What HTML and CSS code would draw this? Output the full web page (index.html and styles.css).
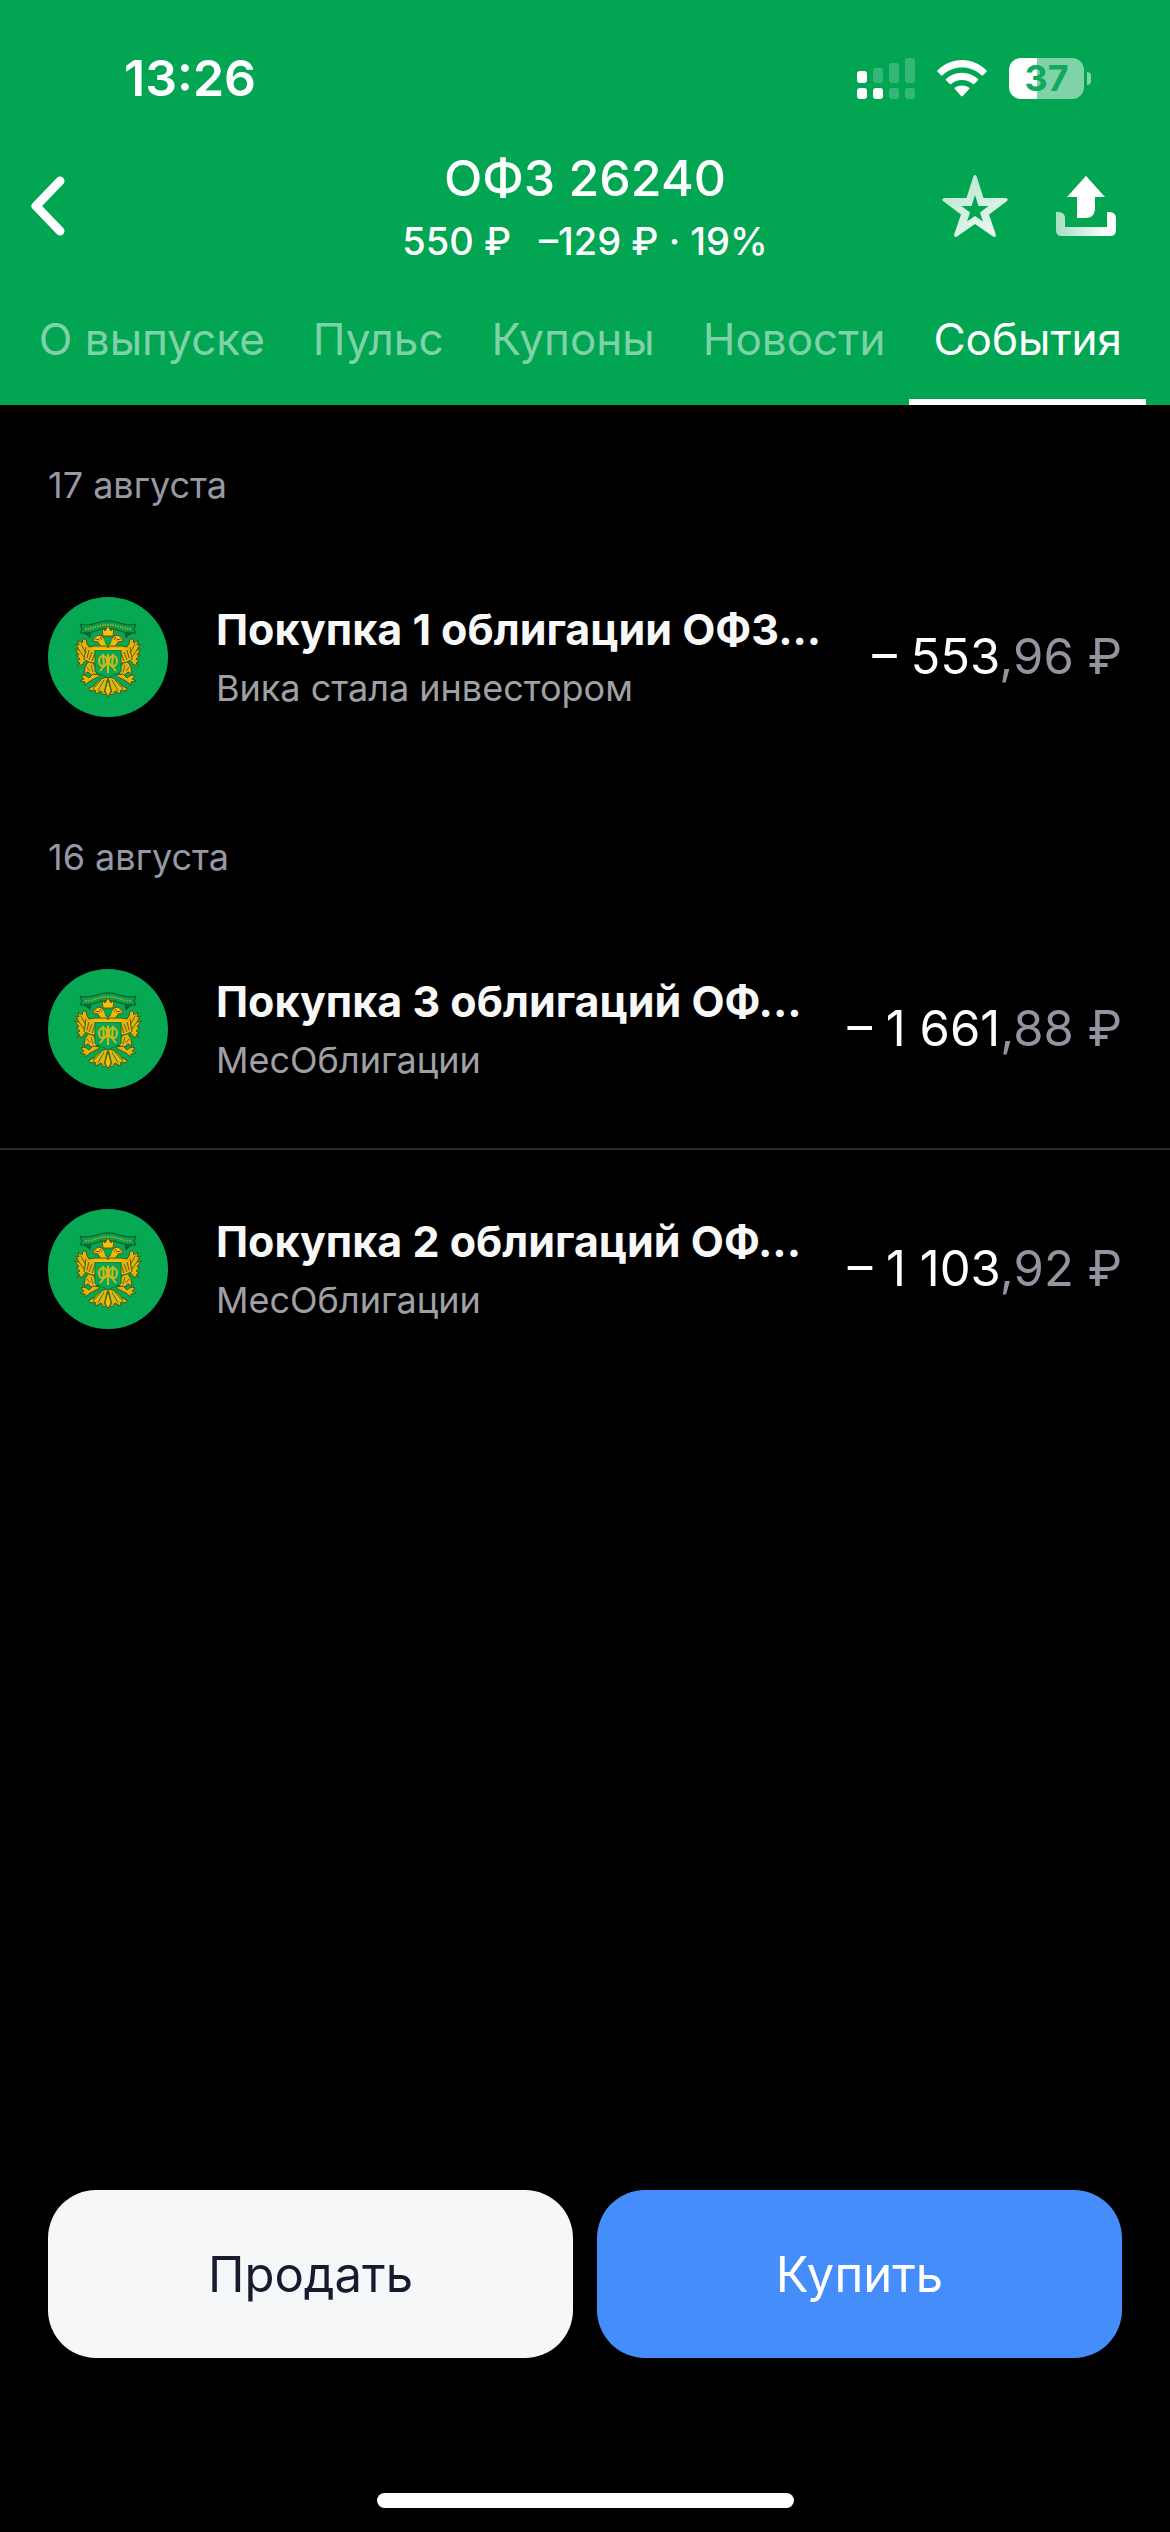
FILE: index.html
```html
<!DOCTYPE html>
<html lang="ru">
<head>
  <meta charset="UTF-8" />
  <meta name="viewport" content="width=device-width, initial-scale=1.0"/>
  <title>ОФЗ 26240</title>
  <link rel="stylesheet" href="styles.css">
</head>
<body>
  <!-- emblem shared by all the rows -->
  <svg class="sprite" aria-hidden="true">
    <defs>
      <g id="eagle-half">
        <path d="M60 24 C53 23 48 28 36 28 L32 27 L34 32 L32 36 L38 36 C46 36 52 31 60 32" fill="#079b4e" stroke="#06552c" stroke-width="1"/>
        <path d="M37 32 C46 32 52 27 60 28" fill="none" stroke="#8fae25" stroke-width="2" stroke-dasharray="1.5 1"/>
        <path d="M36 36 L43 37 L42 41 L39 38 Z" fill="#075f31" stroke="#075f31"/>
        <!-- head -->
        <path d="M60 50 L53 50 L50 45 L45 44 L46 41 L50 38 L54 39 L57 43 L58 47 L60 48 Z" fill="#edbc0b" stroke="#655715" stroke-width="1"/>
        <path d="M47 42 L52 43 M52 40 L54 43" stroke="#6b5510" stroke-width="1"/>
        <!-- wing -->
        <path d="M60 49 L46 49 L41 50 L39 47 L38 42 L35 42 L34 46 L30 43 L31 48 L28 47 L31 53 L27 52 L31 58 L28 58 L32 62 L29 64 L32 66 L29 68 L34 68 L38 63 L42 66 L48 66 L48 53 L60 53 Z" fill="#e5b40b" stroke="#4c5916" stroke-width="1"/>
        <path d="M33 47 L38 56 M31 53 L36 60 M38 50 L36 63 M41 53 L39 61 M44 55 L41 63 M47 56 L44 64" fill="none" stroke="#5f5a12" stroke-width="1"/>
        <!-- supporter -->
        <path d="M40 65 L37 70 L36 77 L40 75 L43 78 L49 77 L48 71 L45 66 Z" fill="#dfb211" stroke="#4c5916" stroke-width="1"/>
        <path d="M39 70 L42 74 M43 68 L45 75" stroke="#78610c"/>
        <path d="M45 77 L41 81 L37 78 L33 79 L36 82 L32 84 L37 85 L37 88 L42 84 L50 80 L52 78 Z" fill="#e5b40b" stroke="#4c5916" stroke-width="1"/>
        <!-- tail -->
        <path d="M60 80 C52 81 49 85 46 89 L41 91 L42 94 L47 93 L48 97 L53 94 L55 98 L60 96 Z" fill="#e5b40b" stroke="#4c5916" stroke-width="1"/>
        <path d="M59 83 L56 96 M56 83 L50 94 M53 83 L45 92" stroke="#2c8231" stroke-width="1"/>
      </g>
      <symbol id="emblem" viewBox="0 0 120 120">
        <circle cx="60" cy="60" r="60" fill="#06a853"/>
        <use href="#eagle-half"/>
        <use href="#eagle-half" transform="translate(120 0) scale(-1 1)"/>
        <path d="M55 39 L54 31 L57 34 L60 29 L63 34 L66 31 L65 39 Z" fill="#f5c20a" stroke="#655715" stroke-width="1"/>
        <path d="M56 42 H64 L63 46 L60 48 L57 46 Z" fill="#06a853"/>
        <path d="M47 53 H73 V74 C72 77 66 77 60 81 C54 77 48 77 47 74 Z" fill="#06a853" stroke="#07763d" stroke-width="1"/>
        <path d="M46 52 H74" stroke="#f5c20a" stroke-width="2"/>
        <g fill="none" stroke="#d7b716" stroke-width="2">
          <ellipse cx="55" cy="64" rx="4" ry="5"/>
          <ellipse cx="65" cy="64" rx="4" ry="5"/>
          <path d="M60 57 V76 M55 57 L56 69 L52 74 M65 57 L64 69 L68 74"/>
        </g>
        <path d="M60 82 L57 94 L60 100 L63 94 Z" fill="#f5c20a" stroke="#4c5916" stroke-width="1"/>
      </symbol>
    </defs>
  </svg>

  <div class="app">
    <header class="header">
      <div class="status">
        <span class="clock">13:26</span>
        <div class="status-icons">
          <svg class="signal" viewBox="0 0 58 41">
            <g fill="#fff">
              <rect x="0" y="13" width="10" height="12" rx="3"/>
              <rect x="0" y="30" width="10" height="11" rx="3"/>
              <rect x="16" y="30" width="10" height="11" rx="3"/>
            </g>
            <g fill="#fff" opacity=".2">
              <rect x="16" y="10" width="10" height="15" rx="3"/>
              <rect x="32" y="5" width="10" height="20" rx="3"/>
              <rect x="48" y="0" width="10" height="25" rx="3"/>
              <rect x="32" y="30" width="10" height="11" rx="3"/>
              <rect x="48" y="30" width="10" height="11" rx="3"/>
            </g>
          </svg>
          <svg class="wifi" viewBox="0 0 50 37">
            <g fill="#fff">
              <path d="M0.5 10.5 C14 -3.5 36 -3.5 49.5 10.5 Q50 11.2 49.5 11.8 L46 15.3 Q45.2 15.9 44.5 15.3 C33.5 5 16.5 5 5.5 15.3 Q4.8 15.9 4 15.3 L0.5 11.8 Q0 11.2 0.5 10.5 Z"/>
              <path d="M9 19 C18 10.5 32 10.5 41 19 Q41.6 19.7 41 20.3 L37.2 24 Q36.5 24.6 35.8 24 C30 18.5 20 18.5 14.2 24 Q13.5 24.6 12.8 24 L9 20.3 Q8.4 19.7 9 19 Z"/>
              <path d="M17.8 27.8 C22 24.6 28 24.6 32.2 27.8 Q32.8 28.4 32.2 29 L25.8 36 Q25 36.9 24.2 36 L17.8 29 Q17.2 28.4 17.8 27.8 Z"/>
            </g>
          </svg>
          <div class="battery"><span>37</span></div>
        </div>
      </div>

      <div class="top">
        <button class="back" aria-label="Назад">
          <svg width="36" height="60" viewBox="0 0 36 60"><path d="M30 5 L6 30 L30 55" fill="none" stroke="#fff" stroke-width="9" stroke-linecap="round" stroke-linejoin="round"/></svg>
        </button>
        <div class="heading">
          <h1>ОФЗ 26240</h1>
          <p><span>550 ₽</span><span>–129 ₽ · 19%</span></p>
        </div>
        <div class="actions">
          <button aria-label="В избранное">
            <svg width="66" height="62" viewBox="0 0 66 62">
              <defs>
                <linearGradient id="star-fill" x1="0" y1="0" x2=".5" y2="1">
                  <stop offset="0" stop-color="#fff" stop-opacity=".7"/>
                  <stop offset="1" stop-color="#fff" stop-opacity=".9"/>
                </linearGradient>
              </defs>
              <path fill="url(#star-fill)" fill-rule="evenodd" d="M31.5 1 Q33 -1 34.5 1 L41.5 23 H64 Q67 24 65 26 L47 39.5 L54 60 Q53.5 63 51 61.5 L33 49 L15 61.5 Q12.5 63 12 60 L19 39.5 L1 26 Q-1 24 2 23 H24.5 Z M33 20 L29.5 31 H19.500 L28 37.5 L25 46.5 L33 41 L41 46.5 L38 37.5 L46.5 31 H36.5 Z"/>
            </svg>
          </button>
          <button aria-label="Поделиться">
            <svg width="60" height="60" viewBox="0 0 60 60">
              <defs>
                <linearGradient id="tray-fill" x1="0" y1="0" x2="1" y2="0">
                  <stop offset="0" stop-color="#fff" stop-opacity=".65"/>
                  <stop offset=".9" stop-color="#fff"/>
                </linearGradient>
              </defs>
              <path fill="#fff" d="M29 1 Q30 -1 31 1 L49 21 H39 V32 C39 38 36 42 30 42 H21 V21 H11 Z"/>
              <path fill="url(#tray-fill)" d="M0 36 H3 Q9 37 9 42 V51 H51 V36 H54 Q60 37 60 42 V54 Q60 60 54 60 H6 Q0 60 0 54 Z"/>
            </svg>
          </button>
        </div>
      </div>

      <nav class="tabs">
        <a href="#">О выпуске</a>
        <a href="#">Пульс</a>
        <a href="#">Купоны</a>
        <a href="#">Новости</a>
        <a href="#" class="active">События</a>
      </nav>
    </header>

    <main class="events">
      <h2 class="date">17 августа</h2>
      <div class="event">
        <svg class="logo"><use href="#emblem"/></svg>
        <div class="info">
          <h3>Покупка 1 облигации ОФЗ...</h3>
          <p>Вика стала инвестором</p>
        </div>
        <div class="sum">– 553<span>,96 ₽</span></div>
      </div>

      <h2 class="date">16 августа</h2>
      <div class="event">
        <svg class="logo"><use href="#emblem"/></svg>
        <div class="info">
          <h3>Покупка 3 облигаций ОФ...</h3>
          <p>МесОблигации</p>
        </div>
        <div class="sum">– 1 661<span>,88 ₽</span></div>
      </div>
      <div class="event">
        <svg class="logo"><use href="#emblem"/></svg>
        <div class="info">
          <h3>Покупка 2 облигаций ОФ...</h3>
          <p>МесОблигации</p>
        </div>
        <div class="sum">– 1 103<span>,92 ₽</span></div>
      </div>
    </main>

    <footer class="footer">
      <div class="buttons">
        <button class="sell">Продать</button>
        <button class="buy">Купить</button>
      </div>
      <div class="home-bar"></div>
    </footer>
  </div>
</body>
</html>
```
FILE: styles.css
```css
* {
  margin: 0;
  padding: 0;
  box-sizing: border-box;
  font-family: 'Inter', sans-serif;
}

body {
  background: #000;
  color: #fff;
}

button {
  background: none;
  border: none;
  cursor: pointer;
}

svg {
  display: block;
}

.sprite {
  position: absolute;
  width: 0;
  height: 0;
}

.app {
  display: flex;
  flex-direction: column;
  min-height: 100vh;
}

/* header */
.header {
  background: #02a652;
}

.status {
  display: flex;
  justify-content: space-between;
  align-items: center;
  padding: 48px 78px 0 124px;
}

.clock {
  font-size: 50px;
  line-height: 60px;
  font-weight: 600;
}

.status-icons {
  display: flex;
  align-items: center;
  gap: 22px;
}

.signal {
  width: 58px;
  height: 41px;
}

.wifi {
  width: 50px;
  height: 37px;
}

.battery {
  position: relative;
  width: 75px;
  height: 41px;
  margin-right: 8px;
  border-radius: 12px;
  background: linear-gradient(90deg, #fff 37%, #80d2a8 37%);
  color: #12a95c;
  font-size: 36px;
  line-height: 41px;
  font-weight: 700;
  text-align: center;
}

.battery::after {
  content: "";
  position: absolute;
  right: -7px;
  top: 14px;
  width: 4px;
  height: 13px;
  border-radius: 0 6px 6px 0;
  background: #80d2a8;
}

.top {
  display: grid;
  grid-template-columns: 1fr auto 1fr;
  align-items: center;
  padding: 40px 54px 0 30px;
}

.back {
  justify-self: start;
}

.heading {
  text-align: center;
  padding-left: 24px;
}

.heading h1 {
  font-size: 50px;
  line-height: 60px;
  font-weight: 500;
}

.heading p {
  display: flex;
  justify-content: center;
  gap: 28px;
  margin-top: 10px;
  font-size: 38px;
  line-height: 46px;
  font-weight: 500;
}

.actions {
  display: flex;
  justify-content: flex-end;
  align-items: center;
  gap: 48px;
}

.tabs {
  display: flex;
  justify-content: flex-end;
  padding: 21px 24px 0;
}

.tabs a {
  padding: 30px 24px 36px;
  border-bottom: 6px solid transparent;
  color: #7fd2a8;
  font-size: 44px;
  line-height: 48px;
  text-decoration: none;
  white-space: nowrap;
}

.tabs .active {
  color: #fff;
  border-bottom-color: #fff;
}

/* events */
.events {
  flex: 1;
}

.date {
  padding: 56px 48px 28px;
  color: #9699a3;
  font-size: 36px;
  line-height: 48px;
  font-weight: 400;
}

.event {
  display: flex;
  align-items: center;
  height: 240px;
  padding: 0 48px;
}

.event + .event {
  margin-top: -1px;
  border-top: 2px solid #2b2b2d;
}

.logo {
  flex: none;
  width: 120px;
  height: 120px;
}

.info {
  flex: 1;
  min-width: 0;
  margin-left: 48px;
}

.info h3 {
  color: #f8f8f8;
  font-size: 43px;
  line-height: 54px;
  font-weight: 700;
  white-space: nowrap;
}

.info p {
  margin-top: 8px;
  color: #9fa0a5;
  font-size: 36px;
  line-height: 48px;
}

.sum {
  font-size: 49px;
  line-height: 60px;
  white-space: nowrap;
}

.sum span {
  color: #9295a0;
}

/* footer */
.footer {
  padding: 0 48px 24px;
}

.buttons {
  display: flex;
  gap: 24px;
}

.buttons button {
  flex: 1;
  height: 168px;
  border-radius: 48px;
  font-size: 49px;
}

.sell {
  background: #f6f7f9;
  color: #161c2d;
}

.buy {
  background: #448dfb;
  color: #fff;
}

.home-bar {
  width: 417px;
  height: 15px;
  margin: 135px auto 0;
  border-radius: 8px;
  background: #fff;
}
```
